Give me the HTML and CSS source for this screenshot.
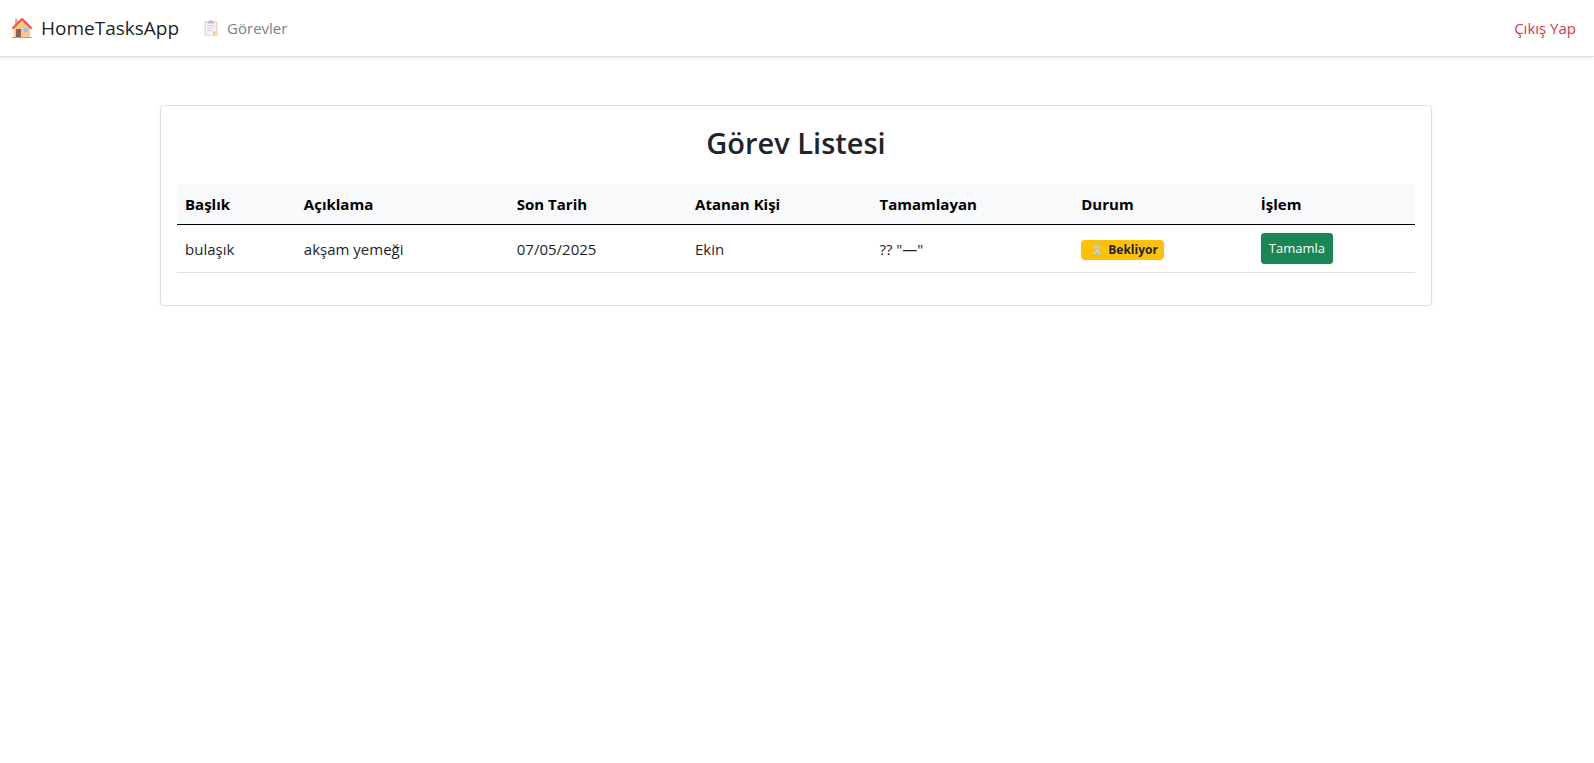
FILE: index.html
```html
<!DOCTYPE html>
<html lang="tr">
<head>
<meta charset="utf-8">
<meta name="viewport" content="width=device-width, initial-scale=1">
<title>HomeTasksApp</title>
<link rel="stylesheet" href="styles.css">
</head>
<body>
<header class="navbar">
  <a class="brand" href="#">
    <svg class="brand-icon" viewBox="0 0 22 22" aria-hidden="true">
      <path fill="#e8b878" d="M4 2h3v6H4z"/>
      <path fill="#f7c78b" d="M3 10l8-7 8 7v10H3z"/>
      <path fill="#8d6153" d="M5 12h5v8H5z"/>
      <path fill="#84cdfb" d="M13 11h4v4h-4z"/>
      <path fill="none" stroke="#fa4b51" stroke-width="2" stroke-linecap="round" stroke-linejoin="round" d="M2 11l9-9 9 9"/>
      <path fill="#2ee68c" d="M1 20h20v1H1z"/>
    </svg>
    <span>HomeTasksApp</span>
  </a>
  <nav class="menu">
    <a class="menu-link" href="#">
      <svg class="menu-icon" viewBox="0 0 16 18" aria-hidden="true">
        <rect x="1.500" y="2" width="13" height="15" rx="1" fill="#f6d9b4"/>
        <path fill="#f2f2f8" d="M3 3.500h10v9L10 16H3z"/>
        <path fill="#edc292" d="M10 16v-3.500h3z"/>
        <path fill="#bcbec8" d="M5 2h2a1 1 0 0 1 2 0h2v2.500H5z"/>
        <path stroke="#d0d1da" d="M4.500 6.500h7M4.500 9h7M4.500 11.500h5"/>
      </svg>
      <span>Görevler</span>
    </a>
  </nav>
  <button class="logout" type="button">Çıkış Yap</button>
</header>
<main class="page">
  <section class="card">
    <h1 class="title">Görev Listesi</h1>
    <table class="tasks">
      <colgroup>
        <col class="col-title"><col class="col-description"><col class="col-date"><col class="col-assignee"><col class="col-completer"><col class="col-status"><col class="col-action">
      </colgroup>
      <thead>
        <tr>
          <th scope="col">Başlık</th>
          <th scope="col">Açıklama</th>
          <th scope="col">Son Tarih</th>
          <th scope="col">Atanan Kişi</th>
          <th scope="col">Tamamlayan</th>
          <th scope="col">Durum</th>
          <th scope="col">İşlem</th>
        </tr>
      </thead>
      <tbody>
        <tr>
          <td>bulaşık</td>
          <td>akşam yemeği</td>
          <td>07/05/2025</td>
          <td>Ekin</td>
          <td>?? "—"</td>
          <td>
            <span class="badge">
              <svg class="badge-icon" viewBox="0 0 10 13" aria-hidden="true">
                <path fill="#c6d6c4" d="M1.500 1.500h7v2L6 6.500l2.500 3v2h-7v-2L4 6.500l-2.500-3z"/>
                <path fill="#efb34c" d="M3 3.500h4L5 6zM2.500 11L5 8.500 7.500 11z"/>
                <path fill="#a5c4c4" d="M.5.500h9v1.500h-9zM.5 11h9v1.500h-9z"/>
              </svg>
              <span>Bekliyor</span>
            </span>
          </td>
          <td><button class="complete" type="button">Tamamla</button></td>
        </tr>
      </tbody>
    </table>
  </section>
</main>
</body>
</html>
```
FILE: styles.css
```css
*,
*::before,
*::after {
  box-sizing: border-box;
}

body {
  margin: 0;
  background: #fff;
  color: #212529;
  font-family: "Segoe UI", "Open Sans", "Noto Sans", sans-serif;
  font-size: 15px;
  line-height: 24px;
}

.navbar {
  display: flex;
  align-items: center;
  gap: 24px;
  min-height: 57px;
  padding: 8px 18px 8px 11px;
  border-bottom: 1px solid #dee2e6;
  box-shadow: 0 2px 4px rgba(0, 0, 0, 0.075);
}

.brand,
.menu-link {
  display: flex;
  align-items: center;
  gap: 8px;
  text-decoration: none;
}

.brand {
  color: rgba(0, 0, 0, 0.9);
  font-size: 19px;
  line-height: 30px;
}

.brand-icon {
  width: 22px;
  height: 22px;
}

.menu {
  flex: 1;
  display: flex;
}

.menu-link {
  color: #7f7f7f;
}

.menu-icon {
  width: 16px;
  height: 18px;
}

.logout {
  padding: 0;
  border: 0;
  background: none;
  color: #dc3545;
  font: inherit;
  cursor: pointer;
}

.page {
  max-width: 1320px;
  margin: 48px auto 0;
  padding: 0 25px 0 23px;
}

.card {
  padding: 16px 16px 32px;
  border: 1px solid #dfdfdf;
  border-radius: 4px;
  box-shadow: 0 2px 4px rgba(0, 0, 0, 0.075);
}

.title {
  margin: 0;
  padding: 2px 0 22px;
  font-size: 29px;
  font-weight: 600;
  line-height: 38px;
  text-align: center;
}

.tasks {
  width: 100%;
  table-layout: fixed;
  border-collapse: collapse;
}

.col-title { width: 9.6%; }
.col-description { width: 17.2%; }
.col-date { width: 14.4%; }
.col-assignee { width: 14.9%; }
.col-completer { width: 16.3%; }
.col-status { width: 14.5%; }
.col-action { width: 13.1%; }

.tasks th,
.tasks td {
  padding: 8px;
  text-align: left;
  vertical-align: middle;
}

.tasks th {
  border-bottom: 1px solid #000;
  background: #f8f9fa;
  color: #000;
  font-weight: 700;
}

.tasks td {
  border-bottom: 1px solid #dee2e6;
}

.badge {
  display: inline-flex;
  align-items: center;
  gap: 6px;
  padding: 4px 6px 4px 11px;
  border-radius: 4px;
  background: #ffc107;
  font-size: 12px;
  font-weight: 700;
  line-height: 12px;
  vertical-align: middle;
}

.badge-icon {
  width: 10px;
  height: 12px;
}

.complete {
  display: block;
  padding: 4px 7px;
  border: 1px solid #198754;
  border-radius: 3px;
  background: #198754;
  color: #fff;
  font-family: inherit;
  font-size: 13px;
  line-height: 21px;
  cursor: pointer;
}
```
